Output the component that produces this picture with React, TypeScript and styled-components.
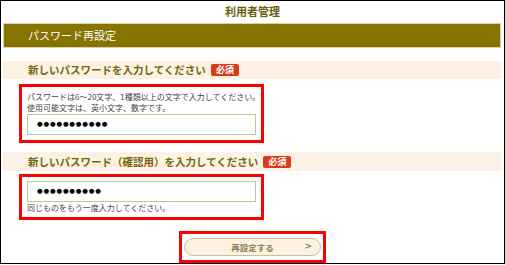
import React from 'react'
import styled, { createGlobalStyle } from 'styled-components'

const GlobalStyle = createGlobalStyle`
    html, body {
        margin:0;
        padding:0;
        background:#ffffff;
    }
    body {
        font-family:"Noto Sans CJK JP", "Liberation Sans", sans-serif;
    }
`

const Frame = styled.div`
    width:505px;
    height:264px;
    box-sizing:border-box;
    border:1px solid #000000;
    background:#ffffff;
    display:flex;
    flex-direction:column;
`

const Title = styled.div`
    height:22px;
    line-height:20px;
    text-align:center;
    font-size:11px;
    font-weight:bold;
    color:#6b5c0c;
`

const Bar = styled.div`
    height:25px;
    margin:0 3px 0 2px;
    box-sizing:border-box;
    border:1px solid #d9d1a8;
    background:#867300;
    color:#ffffff;
    font-size:11px;
    line-height:23px;
    padding-left:24px;
`

const SectionHead = styled.div<{ $top: number }>`
    height:19px;
    margin:${p => p.$top}px 3px 0 2px;
    background:#fdf1e3;
    display:flex;
    align-items:center;
    gap:5px;
    padding-left:25px;
`

const HeadText = styled.span`
    font-size:10.5px;
    font-weight:bold;
    color:#76650a;
`

const Badge = styled.span`
    background:#d63c17;
    color:#ffffff;
    font-size:9px;
    font-weight:bold;
    line-height:12px;
    padding:0 5px;
    border-radius:2px;
`

const RedBox = styled.div<{ $top: number }>`
    width:245px;
    box-sizing:border-box;
    margin:${p => p.$top}px 0 0 18px;
    border:3px solid #ff0000;
    padding:4px 5px;
    display:flex;
    flex-direction:column;
`

const Note = styled.div`
    font-size:8px;
    line-height:11px;
    white-space:nowrap;
    color:#444444;
`

const Field = styled.div<{ $gap: number }>`
    height:21px;
    margin:${p => p.$gap}px 0;
    box-sizing:border-box;
    border:1px solid #c9bf93;
    background:#ffffff;
    font-family:"DejaVu Sans", sans-serif;
    font-size:6.5px;
    letter-spacing:0.8px;
    line-height:19px;
    padding-left:9px;
    color:#000000;
`

const ButtonBox = styled.div`
    align-self:center;
    width:147px;
    box-sizing:border-box;
    margin-top:11px;
    border:3px solid #ff0000;
    padding:4px 2px;
`

const Pill = styled.div`
    height:18px;
    box-sizing:border-box;
    border:1px solid #c9bf93;
    border-radius:10px;
    background:#fdf1e3;
    display:flex;
    align-items:center;
    justify-content:center;
    position:relative;
    font-size:8.5px;
    font-weight:bold;
    color:#8c7f55;
`

const Arrow = styled.span`
    position:absolute;
    right:8px;
    top:2px;
    font-family:"DejaVu Sans", sans-serif;
    font-size:9px;
    font-weight:normal;
    color:#555555;
`

const App: React.FC = () => {
    return <>
        <GlobalStyle />
        <Frame>
            <Title>利用者管理</Title>
            <Bar>パスワード再設定</Bar>
            <SectionHead $top={13}>
                <HeadText>新しいパスワードを入力してください</HeadText>
                <Badge>必須</Badge>
            </SectionHead>
            <RedBox $top={5}>
                <Note>パスワードは6～20文字、1種類以上の文字で入力してください。</Note>
                <Note>使用可能文字は、英小文字、数字です。</Note>
                <Field $gap={1}>●●●●●●●●●●●</Field>
            </RedBox>
            <SectionHead $top={9}>
                <HeadText>新しいパスワード（確認用）を入力してください</HeadText>
                <Badge>必須</Badge>
            </SectionHead>
            <RedBox $top={3}>
                <Field $gap={0}>●●●●●●●●●●</Field>
                <Note>同じものをもう一度入力してください。</Note>
            </RedBox>
            <ButtonBox>
                <Pill>
                    再設定する
                    <Arrow>&gt;</Arrow>
                </Pill>
            </ButtonBox>
        </Frame>
    </>
}

export default App
